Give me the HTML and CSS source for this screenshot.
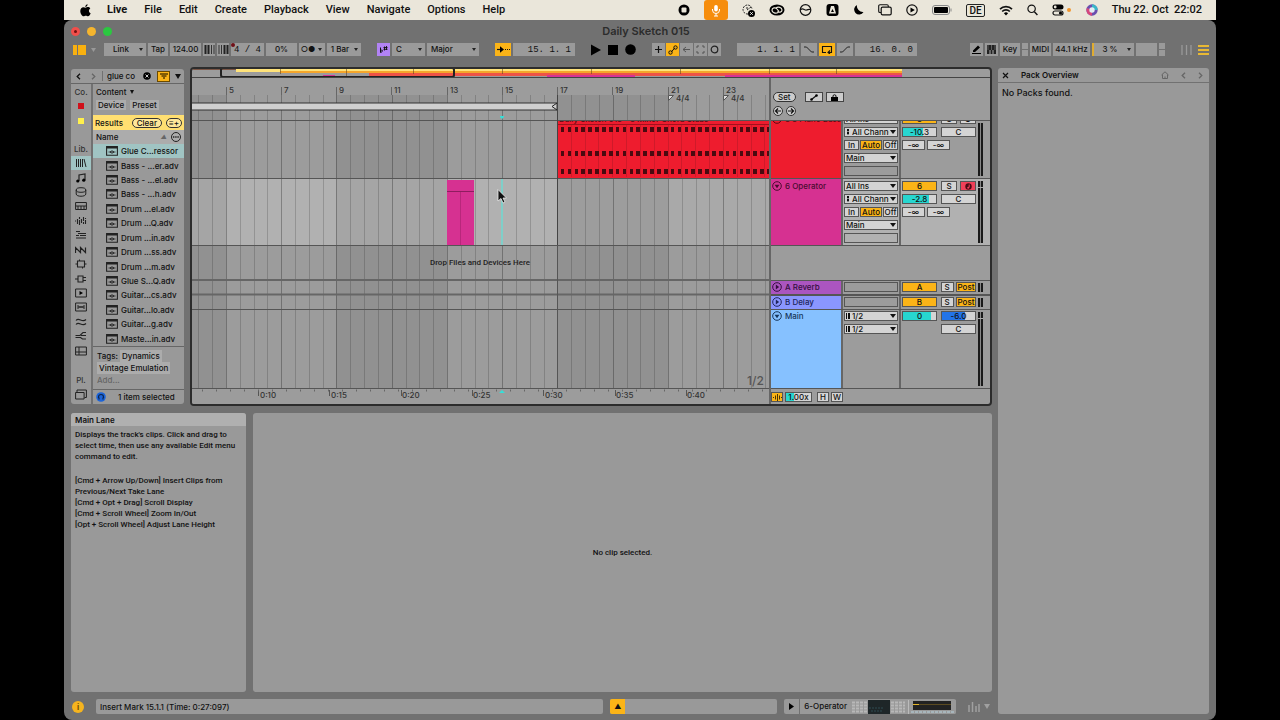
FILE: index.html
```html
<!DOCTYPE html>
<html lang="en">
<head>
    <meta charset="UTF-8">
    <meta name="viewport" content="width=device-width, initial-scale=1.0">
    <title>Daily Sketch 015</title>
    <link rel="stylesheet" href="styles.css">
</head>
<body>
    <!-- shared icons -->
    <svg class="defs" width="0" height="0">
        <symbol id="i-preset" viewBox="0 0 12 10"><path d="M.6.6h10.800v8.600H.6z" fill="none" stroke="#222" stroke-width="1.100"/><path d="M.5 1h11v1.600H.5z" fill="#222"/><path d="M2.500 6h7M4.500 5v2M6 4v4M7.500 5v2" stroke="#222" stroke-width=".8"/></symbol>
        <symbol id="i-fold" viewBox="0 0 10 10"><circle cx="5" cy="5" r="4.300" fill="none" stroke="currentColor"/><path d="M2.600 3.800h4.800L5 7.200z" fill="currentColor"/></symbol>
        <symbol id="i-unfold" viewBox="0 0 10 10"><circle cx="5" cy="5" r="4.300" fill="none" stroke="currentColor"/><path d="M3.800 2.600v4.800L7.200 5z" fill="currentColor"/></symbol>
        <symbol id="i-prev" viewBox="0 0 5 7"><path d="M4 .8L1.200 3.500 4 6.200" fill="none" stroke="currentColor" stroke-width="1.300"/></symbol>
        <symbol id="i-next" viewBox="0 0 5 7"><path d="M1 .8l2.800 2.700L1 6.200" fill="none" stroke="currentColor" stroke-width="1.300"/></symbol>
    </svg>

    <header class="menubar">
        <svg class="apple" width="11" height="13" viewBox="0 0 11 13"><path d="M7.600.2c.1 1.400-1 2.700-2.300 2.700C5.200 1.600 6.300.4 7.600.2zM5.600 3.700c.6 0 1.300-.6 2.300-.6.9 0 1.900.5 2.400 1.300-2 1.200-1.700 3.900.4 4.800-.5 1.300-1.500 3-2.700 3-.8 0-1.200-.5-2.200-.5s-1.400.5-2.200.5C2 12.200.2 9.300.3 6.900c0-2.300 1.500-3.700 3.100-3.700.9 0 1.600.5 2.200.5z"/></svg>
        <nav class="menus">
            <a class="app-name" href="#">Live</a>
            <a href="#">File</a>
            <a href="#">Edit</a>
            <a href="#">Create</a>
            <a href="#">Playback</a>
            <a href="#">View</a>
            <a href="#">Navigate</a>
            <a href="#">Options</a>
            <a href="#">Help</a>
        </nav>
        <div class="menu-extras">
            <svg width="12" height="12" viewBox="0 0 12 12"><circle cx="6" cy="6" r="5.500"/><rect x="3.500" y="3.500" width="5" height="5" rx="1" fill="#eae6da"/></svg>
            <span class="mic"><svg width="10" height="13" viewBox="0 0 10 13"><rect x="3.200" y="1" width="3.600" height="6.500" rx="1.800" fill="#fff"/><path d="M1.500 5v1a3.500 3.500 0 0 0 7 0V5M5 9.500v2.500M3 12h4" fill="none" stroke="#fff"/></svg></span>
            <svg width="13" height="13" viewBox="0 0 13 13"><path d="M6 10a4.500 4.500 0 1 1 4-5M5 3v3l4-3" fill="none" stroke="#222" stroke-dasharray="2 1"/><circle cx="9.500" cy="9.500" r="3.500"/><path d="M8.200 8.200l2.600 2.600M10.800 8.200l-2.600 2.600" stroke="#fff" stroke-width=".9"/></svg>
            <svg width="16" height="12" viewBox="0 0 16 12"><ellipse cx="8" cy="6" rx="7.500" ry="5.500"/><path d="M9 8.500c-2 1.300-6 .5-6-2.300 0-2.500 3.500-3.300 5-1.200l2 2.500M7 4c2-1.700 6-.8 6 2 0 2.300-3 3-4.500 1.300" fill="none" stroke="#eae6da" stroke-width="1.200"/></svg>
            <svg width="13" height="12" viewBox="0 0 13 12"><circle cx="6.500" cy="6" r="5.300" fill="none" stroke="#111" stroke-width="1.200"/><path d="M1.500 6c2-3 4 .5 6 0s2-1 4-.5" fill="none" stroke="#111" stroke-width="1.200"/></svg>
            <svg width="13" height="12" viewBox="0 0 13 12"><rect x=".5" width="12" height="12" rx="3"/><path d="M5 2h3l2 7.500H3z" fill="#eae6da"/><path d="M6.500 5L5 8h3z"/></svg>
            <svg width="11" height="12" viewBox="0 0 11 12"><path d="M4 1a5 5 0 1 0 6.500 7A6 6 0 0 1 4 1z"/></svg>
            <svg width="14" height="12" viewBox="0 0 14 12"><path d="M3 8.500H2A1.300 1.300 0 0 1 .7 7.200V2A1.300 1.300 0 0 1 2 .7h7A1.300 1.300 0 0 1 10.300 2v1" fill="none" stroke="#111" stroke-width="1.100"/><rect x="3.200" y="3.200" width="10" height="7.600" rx="1.400" fill="none" stroke="#111" stroke-width="1.200"/></svg>
            <svg width="12" height="12" viewBox="0 0 12 12"><circle cx="6" cy="6" r="5.200" fill="none" stroke="#111" stroke-width="1.200"/><path d="M4.500 3.400v5.200L8.800 6z"/></svg>
            <svg width="20" height="10" viewBox="0 0 20 10"><rect x=".5" y=".5" width="17" height="9" rx="2.500" fill="none" stroke="#888"/><rect x="2" y="2" width="14" height="6" rx="1"/><path d="M19 3.500v3" stroke="#888"/></svg>
            <span class="keyboard">DE</span>
            <svg width="14" height="11" viewBox="0 0 14 11"><path d="M1 4.200a8.500 8.500 0 0 1 12 0M3.200 6.500a5.300 5.300 0 0 1 7.600 0" fill="none" stroke="#111" stroke-width="1.700"/><path d="M4.900 8.300a3 3 0 0 1 4.200 0L7 10.500z"/></svg>
            <svg width="11" height="12" viewBox="0 0 11 12"><circle cx="4.600" cy="4.800" r="3.700" fill="none" stroke="#111" stroke-width="1.200"/><path d="M7.400 7.800l3 3.200" stroke="#111" stroke-width="1.400"/></svg>
            <svg width="20" height="12" viewBox="0 0 20 12"><rect x=".5" y=".5" width="11" height="5" rx="2.500"/><circle cx="3.200" cy="3" r="1.400" fill="#eae6da"/><rect x="1" y="7" width="10" height="4" rx="2" fill="none" stroke="#111" stroke-width="1.200"/><circle cx="8.500" cy="9" r="1.600"/><circle cx="17" cy="6" r="2" fill="#f2962c"/></svg>
            <svg width="12" height="12" viewBox="0 0 12 12"><circle cx="6" cy="6" r="5.700" fill="#6a4fae"/><path d="M6 .3A5.700 5.700 0 0 1 11.700 6L6 6z" fill="#38b6c8"/><path d="M6 11.700A5.700 5.700 0 0 1 .8 4L6 6z" fill="#d7477c"/><circle cx="6" cy="6" r="2.700" fill="#e3eef4"/></svg>
            <span class="clock">Thu 22. Oct&nbsp; 22:02</span>
        </div>
    </header>

    <main class="live">
        <div class="titlebar">
            <div class="lights"><i class="close"></i><i class="minimise"></i><i class="maximise"></i></div>
            <h1>Daily Sketch 015</h1>
        </div>

        <div class="transport">
            <div class="group">
                <button class="bare" aria-label="Browser"><svg width="23" height="12" viewBox="0 0 23 12"><path d="M0 1h4v10H0zM5 1h8v10H5z" fill="#f9b110"/><path d="M18 4h5l-2.500 4z" fill="#999"/></svg></button>
                <span class="spacer"></span>
                <span class="drop w42"><select aria-label="Link"><option>Link</option></select></span>
                <button class="cell w20">Tap</button>
                <input class="cell w31" aria-label="Tempo" value="124.00">
                <button class="cell w12" aria-label="Nudge down"><svg width="11" height="9" viewBox="0 0 11 9"><path d="M1.500 0v9M4.500 0v9" stroke="#222" stroke-width="2"/><path d="M7.500 0v9M10 0v9" stroke="#333"/></svg></button>
                <button class="cell w12" aria-label="Nudge up"><svg width="11" height="9" viewBox="0 0 11 9"><path d="M1 0v9M3.500 0v9" stroke="#333"/><path d="M6.500 0v9M9.500 0v9" stroke="#222" stroke-width="2"/></svg></button>
                <span class="signature"><input class="cell mono w33" aria-label="Time signature" value="4 / 4"></span>
                <input class="cell w31" aria-label="Groove" value="0%">
                <span class="drop w26"><select aria-label="Metronome"><option>○●</option></select></span>
                <span class="drop w34"><select aria-label="Quantization"><option>1 Bar</option></select></span>
            </div>
            <div class="group">
                <button class="cell w13 purple" aria-label="Scale"><svg width="9" height="9" viewBox="0 0 9 9"><path d="M1.500 2.500v5c1.200-.3 2-1 2-1.800S2.500 5 1.500 5.800" fill="none" stroke="#111"/><path d="M5.500 1.500v4M7.500 1v4M4.500 2.500h4M4.500 4.300h4" stroke="#111" stroke-width=".9"/></svg></button>
                <span class="drop left w33"><select aria-label="Root note"><option>C</option></select></span>
                <span class="drop left w52"><select aria-label="Scale name"><option>Major</option></select></span>
            </div>
            <div class="group">
                <button class="cell w16 on" aria-label="Follow"><svg width="14" height="9" viewBox="0 0 14 9"><path d="M1 4.500h4" stroke="#111" stroke-width="1.200"/><path d="M4 1.200l4 3.300-4 3.300z"/><path d="M9 4.500h5" stroke="#111" stroke-dasharray="1 1"/></svg></button>
                <input class="cell mono right w62" aria-label="Position" value="15. 1. 1">
            </div>
            <div class="group play">
                <button class="bare" aria-label="Play"><svg width="10" height="12" viewBox="0 0 10 12"><path d="M0 .5v11L10 6z"/></svg></button>
                <button class="bare" aria-label="Stop"><svg width="10" height="10" viewBox="0 0 10 10"><path d="M0 0h10v10H0z"/></svg></button>
                <button class="bare" aria-label="Record"><svg width="11" height="11" viewBox="0 0 11 11"><circle cx="5.500" cy="5.500" r="5.300"/></svg></button>
            </div>
            <div class="group tight">
                <button class="cell w13" aria-label="Overdub"><svg width="9" height="9" viewBox="0 0 9 9"><path d="M4.500 1v7M1 4.500h7" stroke="#111" stroke-width="1.200"/></svg></button>
                <button class="cell w13 on" aria-label="Automation arm"><svg width="10" height="10" viewBox="0 0 10 10"><path d="M3.200 7.200l3.600-4.400" stroke="#111"/><circle cx="2.500" cy="7.500" r="1.700" fill="none" stroke="#111"/><circle cx="7.500" cy="2.500" r="1.700" fill="none" stroke="#111"/></svg></button>
                <button class="cell w13" aria-label="Re-enable automation"><svg width="9" height="9" viewBox="0 0 9 9"><path d="M1 4.500h7M4 2L1 4.500 4 7" fill="none" stroke="#555"/></svg></button>
                <button class="cell w13" aria-label="Capture MIDI"><svg width="9" height="9" viewBox="0 0 9 9"><path d="M1 3V1h2M6 1h2v2M8 6v2H6M3 8H1V6" fill="none" stroke="#555"/></svg></button>
                <button class="cell w13" aria-label="Session record"><svg width="9" height="9" viewBox="0 0 9 9"><circle cx="4.500" cy="4.500" r="3.300" fill="none" stroke="#222" stroke-width="1.200"/></svg></button>
            </div>
            <div class="group">
                <input class="cell mono right w62" aria-label="Loop start" value="1. 1. 1">
                <button class="cell w16" aria-label="Punch in"><svg width="12" height="9" viewBox="0 0 12 9"><path d="M1 2h2.500l5 5H11" fill="none" stroke="#222"/></svg></button>
                <button class="cell w16 on" aria-label="Loop"><svg width="12" height="9" viewBox="0 0 12 9"><path d="M5 7.500H1.500v-6h9v6H8M9 5.500L7 7.500 9 9" fill="none" stroke="#111" stroke-width="1.100"/></svg></button>
                <button class="cell w16" aria-label="Punch out"><svg width="12" height="9" viewBox="0 0 12 9"><path d="M1 7h2.500l5-5H11" fill="none" stroke="#222"/></svg></button>
                <input class="cell mono right w62" aria-label="Loop length" value="16. 0. 0">
            </div>
            <div class="group push">
                <button class="cell w13" aria-label="Draw"><svg width="9" height="9" viewBox="0 0 9 9"><path d="M1 5.500L6 .5l2 2L3 7H1zM0 8h9v1H0z"/></svg></button>
                <button class="cell w13" aria-label="Computer keyboard"><svg width="9" height="9" viewBox="0 0 9 9"><path d="M0 0h9v9H0z" fill="#222"/><path d="M3 5v4M6 5v4" stroke="#aaa"/><path d="M1 0v5M4.500 0v5M8 0v5" stroke="#888" stroke-width=".6"/></svg></button>
                <button class="cell w20">Key</button>
                <i class="cell led"></i>
                <button class="cell w21">MIDI</button>
                <span class="cell w37">44.1 kHz</span>
                <span class="drop cpu w42"><select aria-label="CPU load"><option>3 %</option></select></span>
                <i class="cell w21"></i>
                <i class="cell led"></i>
            </div>
            <div class="group views">
                <button class="bare" aria-label="Session view"><svg width="11" height="12" viewBox="0 0 11 12"><path d="M1 1v10M5.500 1v10M10 1v10" stroke="#999" stroke-width="1.300"/></svg></button>
                <button class="bare" aria-label="Arrangement view"><svg width="11" height="12" viewBox="0 0 11 12"><path d="M0 2h11M0 6h11M0 10h11" stroke="#e9b934" stroke-width="1.800"/></svg></button>
            </div>
        </div>

        <div class="workspace">
            <div class="center">
                <div class="upper">
                    <aside class="browser">
                        <div class="search">
                            <button class="bare" aria-label="Back"><svg width="5" height="7"><use href="#i-prev"/></svg></button>
                            <button class="bare dim" aria-label="Forward"><svg width="5" height="7"><use href="#i-next"/></svg></button>
                            <input aria-label="Search" value="glue co">
                            <svg width="8" height="8" viewBox="0 0 8 8"><circle cx="4" cy="4" r="3.800"/><path d="M2.500 2.500l3 3M5.500 2.500l-3 3" stroke="#ccc"/></svg>
                            <button class="filter" aria-label="Filter"><svg width="8" height="7" viewBox="0 0 8 7"><path d="M0 1h8M1.500 3h5M3 5h2" stroke="#5b3f00" stroke-width="1.300"/></svg></button>
                            <i class="tri"></i>
                        </div>
                        <div class="browser-body">
                            <div class="labels">
                                <div class="collections">
                                    <span>Co.</span>
                                    <i class="red"></i>
                                    <i class="yellow"></i>
                                </div>
                                <span class="lib">Lib.</span>
                                <div class="icons">
                                    <span class="selected"><svg viewBox="0 0 12 10"><path d="M1.500 1v8M3.500 1v8M5.500 1v8M7.500 1v8M9 1l2 8" stroke="#222"/></svg></span>
                                    <span><svg viewBox="0 0 12 10"><path d="M4 8V2l6-1v6" fill="none" stroke="#222" stroke-width="1.200"/><circle cx="2.800" cy="8" r="1.600"/><circle cx="8.800" cy="7.200" r="1.600"/></svg></span>
                                    <span><svg viewBox="0 0 12 10"><ellipse cx="6" cy="3" rx="4.800" ry="2.300" fill="none" stroke="#222"/><path d="M1.200 3v4c0 3 9.600 3 9.600 0V3" fill="none" stroke="#222"/></svg></span>
                                    <span><svg viewBox="0 0 12 10"><path d="M.6 1.500h10.800v7H.6zM.6 5h10.800M3 5v3M6 5v3M9 5v3" fill="none" stroke="#222"/></svg></span>
                                    <span><svg viewBox="0 0 12 10"><path d="M.5 4.500v1M2.500 3v5M4.500 1v2M4.500 4v5M6.500 3v4M8.500 1v4M8.500 6v2M10.500 2v1M10.500 4v4" stroke="#222" stroke-width="1.100"/></svg></span>
                                    <span><svg viewBox="0 0 12 10"><path d="M1 1.500h4M3 3.500h8M5 5.500h6M1 5.500h3M1 8h10" stroke="#222"/></svg></span>
                                    <span><svg viewBox="0 0 12 10"><path d="M.5 8V2.500l5 5v-5l5 5V2.500" fill="none" stroke="#222" stroke-width="1.200"/></svg></span>
                                    <span><svg viewBox="0 0 12 10"><path d="M2.500 2h7v6h-7zM.5 5h2M9.500 5h2M4.500 .5V2M7.500 8v1.500" fill="none" stroke="#222" stroke-width="1.100"/></svg></span>
                                    <span><svg viewBox="0 0 12 10"><path d="M3 2h5v6H3zM0 5h3M8 3.500h3M8 6.500h3" fill="none" stroke="#222" stroke-width="1.100"/></svg></span>
                                    <span><svg viewBox="0 0 12 10"><path d="M.6 1h10.800v8H.6z" fill="none" stroke="#222"/><path d="M4.500 3v4L8 5z"/></svg></span>
                                    <span><svg viewBox="0 0 12 10"><path d="M.6 1h10.800v8H.6zM3 3v4M5 4v2M7 4v2M9 3v4M3 5h6" fill="none" stroke="#222"/></svg></span>
                                    <span><svg viewBox="0 0 12 10"><path d="M1 3.500c3-4 6 3 10-1M1 7.500c3-4 6 3 10-1" fill="none" stroke="#222" stroke-width="1.100"/></svg></span>
                                    <span><svg viewBox="0 0 12 10"><path d="M11 1.500H8L5 4.500H.5M11 4.500H6M11 8H7.500L5.500 6.500H.5" fill="none" stroke="#222" stroke-width="1.100"/></svg></span>
                                    <span><svg viewBox="0 0 12 10"><path d="M.6 1h10.800v8H.6zM.6 6h10.800M4 1v8" fill="none" stroke="#222"/></svg></span>
                                </div>
                                <span class="places">Pl.</span>
                                <svg class="packs-icon" width="12" height="11" viewBox="0 0 12 11"><path d="M.6 3.500h8.500v6.500H.6zM2 3V1h9.400v7.500H9.500" fill="none" stroke="#222"/></svg>
                            </div>
                            <div class="content">
                                <div class="content-head">Content <i class="tri small-tri"></i></div>
                                <div class="chips"><button>Device</button><button>Preset</button></div>
                                <div class="results">Results <button>Clear</button><button>≡+</button></div>
                                <div class="name-head">Name <i class="up">▲</i><button aria-label="Columns"><svg width="8" height="8" viewBox="0 0 8 8"><path d="M1 4h6" stroke="#222" stroke-width="1.400" stroke-dasharray="1.400 .8"/></svg></button></div>
                                <ul class="list">
                                    <li class="selected"><svg><use href="#i-preset"/></svg>Glue C...ressor</li>
                                    <li><svg><use href="#i-preset"/></svg>Bass - ...er.adv</li>
                                    <li><svg><use href="#i-preset"/></svg>Bass - ...el.adv</li>
                                    <li><svg><use href="#i-preset"/></svg>Bass - ...h.adv</li>
                                    <li><svg><use href="#i-preset"/></svg>Drum ...el.adv</li>
                                    <li><svg><use href="#i-preset"/></svg>Drum ...Q.adv</li>
                                    <li><svg><use href="#i-preset"/></svg>Drum ...in.adv</li>
                                    <li><svg><use href="#i-preset"/></svg>Drum ...ss.adv</li>
                                    <li><svg><use href="#i-preset"/></svg>Drum ...m.adv</li>
                                    <li><svg><use href="#i-preset"/></svg>Glue S...Q.adv</li>
                                    <li><svg><use href="#i-preset"/></svg>Guitar...cs.adv</li>
                                    <li><svg><use href="#i-preset"/></svg>Guitar...lo.adv</li>
                                    <li><svg><use href="#i-preset"/></svg>Guitar...g.adv</li>
                                    <li><svg><use href="#i-preset"/></svg>Maste...in.adv</li>
                                </ul>
                                <div class="tags">Tags: <span>Dynamics</span><br><span>Vintage Emulation</span><br><em>Add...</em></div>
                                <div class="selection"><svg width="10" height="10" viewBox="0 0 10 10"><circle cx="5" cy="5" r="4.800" fill="#1c64d8"/><path d="M2.500 6V5a2.500 2.500 0 0 1 5 0v1M3 5.500v2M7 5.500v2" fill="none" stroke="#0b2550" stroke-width="1.200"/></svg><span>1 item selected</span></div>
                            </div>
                        </div>
                    </aside>

                    <section class="arrangement">
                        <svg class="overview" height="9">
                            <rect x="0" y="0" width="44" height="1" fill="#7a5545"/>
                            <rect x="44" y="0" width="666" height="3" fill="#ffe37a"/>
                            <rect x="88" y="2" width="622" height="2" fill="#f5a62b"/>
                            <rect x="177" y="4" width="533" height="3" fill="#ee5346"/>
                            <rect x="131" y="6" width="12" height="2" fill="#d53394"/>
                            <rect x="355" y="6" width="88" height="2" fill="#d53394"/>
                            <rect x="533" y="6" width="177" height="2" fill="#d53394"/>
                            <path d="M88.500 0v5M154.500 0v8M221.500 0v5M310.500 0v5M399.500 0v5M488.500 0v5M577.500 0v5M644.500 0v5" stroke="#6b4a20" stroke-opacity=".6"/>
                            <rect x="29" y="-1" width="233" height="9" rx="2" fill="none" stroke="#222" stroke-width="2"/>
                        </svg>
                        <div class="arrangement-body">
                            <svg class="timeline" height="326">
                                <defs>
                                    <!-- one tile is eight bars: four light, four dark, a line each half bar -->
                                    <pattern id="bars" x="34" y="0" width="221" height="327" patternUnits="userSpaceOnUse">
                                        <rect x="110" width="111" height="327" fill="#000" fill-opacity=".07"/>
                                        <path d="M14.500 0v327M28.500 0v327M41.500 0v327M69.500 0v327M83.500 0v327M97.500 0v327M124.500 0v327M138.500 0v327M152.500 0v327M180.500 0v327M193.500 0v327M207.500 0v327" stroke="#000" stroke-opacity=".17"/>
                                        <path d="M.5 0v327M55.500 0v327M110.500 0v327M166.500 0v327" stroke="#000" stroke-opacity=".27"/>
                                    </pattern>
                                    <pattern id="notes" x="369" y="43" width="55" height="60" patternUnits="userSpaceOnUse">
                                        <path d="M0 6h3v5H0zM7 6h3v5H7zM14 6h3v5h-3zM20 6h4v5h-4zM27 6h4v5h-4zM34 6h4v5h-4zM41 6h4v5h-4zM48 6h4v5h-4zM0 30h3v5H0zM7 30h3v5H7zM14 30h3v5h-3zM20 30h4v5h-4zM27 30h4v5h-4zM34 30h4v5h-4zM41 30h4v5h-4zM48 30h4v5h-4zM0 48h3v5H0zM7 48h3v5H7zM14 48h3v5h-3zM20 48h4v5h-4zM27 48h4v5h-4zM34 48h4v5h-4zM41 48h4v5h-4zM48 48h4v5h-4z" fill="#4a0a10"/>
                                    </pattern>
                                    <clipPath id="track5"><rect y="43" width="100%" height="57"/></clipPath>
                                </defs>
                                <rect width="100%" height="327" fill="#9c9c9c"/>
                                <rect y="101" width="100%" height="66" fill="#b1b1b1"/>
                                <rect x="365" y="101" width="100%" height="66" fill="#a9a9a9"/>
                                <rect y="17" width="100%" height="294" fill="url(#bars)"/>

                                <!-- bar ruler -->
                                <path d="M34.500 9v8M89.500 9v8M144.500 9v8M199.500 9v8M255.500 9v8M310.500 9v8M365.500 9v8M420.500 9v8M476.500 9v8M531.500 9v8" stroke="#666"/>
                                <g class="ruler-text">
                                    <text x="37" y="15">5</text>
                                    <text x="92" y="15">7</text>
                                    <text x="147" y="15">9</text>
                                    <text x="202" y="15">11</text>
                                    <text x="258" y="15">13</text>
                                    <text x="313" y="15">15</text>
                                    <text x="368" y="15">17</text>
                                    <text x="423" y="15">19</text>
                                    <text x="479" y="15">21</text>
                                    <text x="534" y="15">23</text>
                                    <text x="484" y="23">4/4</text>
                                    <text x="539" y="23">4/4</text>
                                </g>
                                <path d="M476.500 17.500h5l-5 5zM531.500 17.500h5l-5 5z" fill="#ddd" stroke="#555"/>
                                <rect x="-1" y="25" width="366" height="7" fill="#cfcfcf" stroke="#333"/>
                                <path d="M365 25l-5 3.500 5 3.500" fill="none" stroke="#222"/>
                                <path d="M308 38h4v1l-2 2-2-2z" fill="#35dfd8"/>

                                <!-- clips -->
                                <g clip-path="url(#track5)">
                                    <rect x="365" y="43" width="100%" height="57" fill="#ee1c2e"/>
                                    <text class="clip-name" x="367" y="44">Daily Sketch 015 - 5 Minor Chord Stabs</text>
                                    <path d="M365 46.500h220" stroke="#a3101d"/>
                                    <path d="M379.500 47v52M393.500 47v52M406.500 47v52M420.500 47v52M434.500 47v52M448.500 47v52M462.500 47v52M476.500 47v52M489.500 47v52M503.500 47v52M517.500 47v52M531.500 47v52M545.500 47v52M559.500 47v52M572.500 47v52" stroke="#cf1a2a"/>
                                    <rect x="366" y="43" width="100%" height="57" fill="url(#notes)"/>
                                </g>
                                <rect x="255" y="102" width="27" height="65" fill="#d63191"/>
                                <path d="M255 113.500h27" stroke="#8e1d5f"/>
                                <path d="M268.500 114v53" stroke="#b8277b"/>
                                <rect x="309" y="101" width="2" height="66" fill="#7fcfc9"/>

                                <!-- lane borders -->
                                <path d="M0 42.500h600M0 100.500h600M0 167.500h600M0 231.500h600M0 310.500h600" stroke="#555"/>
                                <path d="M0 202h600M0 216.500h600" stroke="#666" stroke-width="2"/>
                                <path d="M365.500 17v150" stroke="#444"/>
                                <path d="M365.500 167v144" stroke="#555"/>

                                <text class="drop-text" x="288" y="187">Drop Files and Devices Here</text>
                                <text class="grid-text" x="555" y="307">1/2</text>

                                <!-- time ruler -->
                                <path d="M66.500 312v6M137.500 312v6M209.500 312v6M280.500 312v6M351.500 312v6M423.500 312v6M494.500 312v6" stroke="#555"/>
                                <path d="M10 312.500h570" stroke="#666" stroke-width="2" stroke-dasharray="1 13"/>
                                <g class="ruler-text">
                                    <text x="68" y="320">0:10</text>
                                    <text x="139" y="320">0:15</text>
                                    <text x="210" y="320">0:20</text>
                                    <text x="281" y="320">0:25</text>
                                    <text x="353" y="320">0:30</text>
                                    <text x="424" y="320">0:35</text>
                                    <text x="495" y="320">0:40</text>
                                </g>
                                <path d="M307 315l3-3 3 3z" fill="#35dfd8"/>

                                <!-- pointer -->
                                <path d="M306 111.500v11.500l3-2.500 2 4.500 2-1-2-4h3.500z" fill="#111" stroke="#eee" stroke-width=".8"/>
                            </svg>

                            <div class="tracks">
                                <div class="locators">
                                    <div><button class="pill">Set</button><button class="square" aria-label="Automation"><svg width="8" height="7" viewBox="0 0 8 7"><path d="M1.500 5.500l5-4" stroke="#111" stroke-width="1.200"/><circle cx="1.500" cy="5.500" r="1.300"/><circle cx="6.500" cy="1.500" r="1.300"/></svg></button><button class="square" aria-label="Lock"><svg width="7" height="7" viewBox="0 0 7 7"><path d="M0 3h7v4H0z"/><path d="M2 3V1.500Q3.500 0 5 1.500V3" fill="none" stroke="#111"/></svg></button></div>
                                    <div><button class="round" aria-label="Previous locator"><svg width="8" height="8" viewBox="0 0 8 8"><path d="M1.500 4H7M4 1.500L1.500 4 4 6.500" fill="none" stroke="#111" stroke-width="1.200"/></svg></button><button class="round" aria-label="Next locator"><svg width="8" height="8" viewBox="0 0 8 8"><path d="M1 4h5.500M4 1.500L6.500 4 4 6.500" fill="none" stroke="#111" stroke-width="1.200"/></svg></button></div>
                                </div>
                                <div class="track scrolled">
                                    <div class="track-name red"><svg><use href="#i-fold"/></svg>5 5 Piano Bass</div>
                                    <div class="io">
                                        <span class="pick"><select aria-label="Input type"><option>All Ins</option></select></span>
                                        <span class="pick port"><select aria-label="Input channel"><option>All Channels</option></select></span>
                                        <div class="monitor"><button>In</button><button class="on">Auto</button><button>Off</button></div>
                                        <span class="pick"><select aria-label="Output type"><option>Main</option></select></span>
                                        <span class="blank"></span>
                                    </div>
                                    <div class="mixer">
                                        <div><button class="act on">5</button><button class="small">S</button><button class="small">●</button></div>
                                        <div><input class="vol v65" aria-label="Volume" value="-10.3"><input class="pan" aria-label="Pan" value="C"></div>
                                        <div><input class="send" aria-label="Send A" value="-∞"><input class="send" aria-label="Send B" value="-∞"></div>
                                    </div>
                                    <i class="meter"></i>
                                </div>
                                <div class="track active">
                                    <div class="track-name pink"><svg><use href="#i-fold"/></svg>6 Operator</div>
                                    <div class="io">
                                        <span class="pick"><select aria-label="Input type"><option>All Ins</option></select></span>
                                        <span class="pick port"><select aria-label="Input channel"><option>All Channels</option></select></span>
                                        <div class="monitor"><button>In</button><button class="on">Auto</button><button>Off</button></div>
                                        <span class="pick"><select aria-label="Output type"><option>Main</option></select></span>
                                        <span class="blank"></span>
                                    </div>
                                    <div class="mixer">
                                        <div><button class="act on">6</button><button class="small">S</button><button class="small arm" aria-label="Arm"><svg width="7" height="7" viewBox="0 0 7 7"><circle cx="3.500" cy="3.500" r="3.200" fill="#4a0a14"/><path d="M4.200 1.500v3" stroke="#f04058"/><circle cx="3.200" cy="4.700" r="1" fill="#f04058"/></svg></button></div>
                                        <div><input class="vol v78" aria-label="Volume" value="-2.8"><input class="pan" aria-label="Pan" value="C"></div>
                                        <div><input class="send" aria-label="Send A" value="-∞"><input class="send" aria-label="Send B" value="-∞"></div>
                                    </div>
                                    <i class="meter peak"></i>
                                </div>
                                <div class="drop-zone"></div>
                                <div class="track return">
                                    <div class="track-name violet"><svg><use href="#i-unfold"/></svg>A Reverb</div>
                                    <div class="io"><span class="blank"></span></div>
                                    <div class="mixer"><div><button class="act on">A</button><button class="solo">S</button><button class="post on">Post</button></div></div>
                                    <i class="meter"></i>
                                </div>
                                <div class="track return last">
                                    <div class="track-name blue"><svg><use href="#i-unfold"/></svg>B Delay</div>
                                    <div class="io"><span class="blank"></span></div>
                                    <div class="mixer"><div><button class="act on">B</button><button class="solo">S</button><button class="post on">Post</button></div></div>
                                    <i class="meter"></i>
                                </div>
                                <div class="track main">
                                    <div class="track-name sky"><svg><use href="#i-fold"/></svg>Main</div>
                                    <div class="io">
                                        <span class="pick stereo"><select aria-label="Cue out"><option>1/2</option></select></span>
                                        <span class="pick stereo"><select aria-label="Main out"><option>1/2</option></select></span>
                                    </div>
                                    <div class="mixer">
                                        <div><input class="vol v85" aria-label="Main volume" value="0"><input class="pan cue" aria-label="Cue volume" value="-6.0"></div>
                                        <div class="end"><input class="pan" aria-label="Pan" value="C"></div>
                                    </div>
                                    <i class="meter peak"></i>
                                </div>
                                <div class="zoom-bar">
                                    <button class="wave on" aria-label="Waveform"><svg width="9" height="7" viewBox="0 0 9 7"><path d="M.5 3v1M2.500 1.500v4M4.500 0v7M6.500 1.500v4M8.500 3v1" stroke="#4a3200"/></svg></button>
                                    <input class="rate" aria-label="Waveform zoom" value="1.00x">
                                    <button>H</button><button>W</button>
                                </div>
                            </div>
                        </div>
                    </section>
                </div>

                <div class="lower">
                    <aside class="info">
                        <h2>Main Lane</h2>
                        <p>Displays the track's clips. Click and drag to select time, then use any available Edit menu command to edit.</p>
                        <p>[Cmd + Arrow Up/Down] Insert Clips from Previous/Next Take Lane<br>[Cmd + Opt + Drag] Scroll Display<br>[Cmd + Scroll Wheel] Zoom In/Out<br>[Opt + Scroll Wheel] Adjust Lane Height</p>
                    </aside>
                    <section class="clip-view">No clip selected.</section>
                </div>

                <footer class="status">
                    <button class="info-toggle">i</button>
                    <div class="message">Insert Mark 15.1.1 (Time: 0:27:097)</div>
                    <div class="clip-slot"><button class="on" aria-label="Warning">▲</button></div>
                    <div class="device">
                        <button class="bare" aria-label="Show device"><svg width="6" height="7" viewBox="0 0 6 7"><path d="M0 0v7l5-3.500z"/></svg></button>
                        <span>6-Operator</span>
                        <svg width="105" height="14" viewBox="0 0 105 14"><path d="M1 2.500h16M1 5.500h16M1 8.500h16M1 11.500h16M40 2.500h14M40 5.500h14M40 8.500h14M40 11.500h14" stroke="#b8b8b8" stroke-width="2" stroke-dasharray="3 1"/><rect x="17" width="22" height="14" fill="#1e2628"/><path d="M18 8h15M20 11h12" stroke="#2f4a50" stroke-dasharray="2 1"/><path d="M57.500 0v14" stroke="#bbb"/><rect x="58" width="47" height="14" fill="#999"/><rect x="62" y="1" width="38" height="9" fill="#222"/><path d="M62 4.500h38" stroke="#5b4a20"/><path d="M62 4.500h6" stroke="#e5b72b"/><path d="M60 12h44" stroke="#a8b6bc" stroke-width="2" stroke-dasharray="3 1"/></svg>
                    </div>
                    <button class="bare" aria-label="Overview"><svg width="22" height="11" viewBox="0 0 22 11"><path d="M1 4v7M4.500 1v10M8 5v6M11 3v8" stroke="#a0a0a0" stroke-width="1.500"/><path d="M16 3h6l-3 5z" fill="#a0a0a0"/></svg></button>
                </footer>
            </div>

            <aside class="packs">
                <div class="packs-head">
                    <button class="bare" aria-label="Close"><svg width="7" height="7" viewBox="0 0 7 7"><path d="M1 1l5 5M6 1L1 6" stroke="#111" stroke-width="1.200"/></svg></button>
                    <h2>Pack Overview</h2>
                    <button class="bare dim" aria-label="Home"><svg width="8" height="8" viewBox="0 0 8 8"><path d="M.5 4L4 .8 7.500 4M1.500 3.500v4h5v-4M4 7.500v-2" fill="none" stroke="#666"/></svg></button>
                    <button class="bare dim" aria-label="Back"><svg width="5" height="7"><use href="#i-prev"/></svg></button>
                    <button class="bare dim" aria-label="Forward"><svg width="5" height="7"><use href="#i-next"/></svg></button>
                </div>
                <p>No Packs found.</p>
            </aside>
        </div>
    </main>
</body>
</html>
```

FILE: styles.css
```css
* {
    box-sizing: border-box;
}
body {
    margin: 0;
    padding: 0 5%;
    min-height: 100vh;
    display: flex;
    flex-direction: column;
    background: #000;
    color: #111;
    font-family: Inter, "Liberation Sans", sans-serif;
    font-size: 8px;
    font-weight: 500;
    line-height: 10px;
}
h1, h2, p, ul {
    margin: 0;
    padding: 0;
}
button, input, select {
    margin: 0;
    padding: 0;
    border: 0;
    border-radius: 0;
    background: none;
    color: inherit;
    font: inherit;
    min-width: 0;
    text-align: center;
    appearance: none;
}
button {
    display: flex;
    align-items: center;
    justify-content: center;
}
svg {
    display: block;
    flex: none;
}
.defs {
    position: absolute;
}

/* system menu bar */
.menubar {
    display: flex;
    align-items: center;
    justify-content: space-between;
    height: 20px;
    padding: 0 14px 0 16px;
    background: #eae6da;
    font-family: Roboto, "Liberation Sans", sans-serif;
    font-size: 11px;
    line-height: 14px;
}
.menus {
    display: flex;
    gap: 17px;
    margin: 0 auto 0 16px;
}
.menus a {
    color: #111;
    text-decoration: none;
}
.menus .app-name {
    font-weight: 700;
}
.menu-extras {
    display: flex;
    align-items: center;
    gap: 14px;
}
.mic {
    display: flex;
    align-items: center;
    justify-content: center;
    width: 24px;
    height: 20px;
    border-radius: 3px;
    background: #f68d0c;
}
.keyboard {
    padding: 0 2px;
    border: 1px solid #222;
    border-radius: 2px;
    font-size: 10px;
    line-height: 11px;
}

/* window */
.live {
    flex: 1;
    display: flex;
    flex-direction: column;
    border-radius: 8px;
    background: #717171;
}
.titlebar {
    display: grid;
    grid-template-columns: 1fr auto 1fr;
    align-items: center;
    height: 22px;
    padding: 0 7px;
}
.titlebar h1 {
    margin-left: 12px;
    color: #2c2c2c;
    font-size: 11px;
    font-weight: 600;
    line-height: 14px;
}
.lights {
    display: flex;
    gap: 7px;
}
.lights i {
    width: 9px;
    height: 9px;
    border-radius: 50%;
}
.lights .close {
    border: 3px solid #f04e4a;
    background: #701010;
}
.lights .minimise {
    background: #f5b52e;
}
.lights .maximise {
    background: #2bc840;
}

/* transport */
.transport {
    display: flex;
    align-items: center;
    gap: 16px;
    height: 15px;
    padding: 0 7px 0 9px;
}
.group {
    display: flex;
    align-items: center;
    gap: 2px;
}
.group.play {
    gap: 7px;
}
.group.tight {
    gap: 1px;
}
.group.push {
    margin-left: auto;
}
.group.views {
    gap: 6px;
}
.spacer {
    width: 4px;
}
.cell, .drop select {
    display: flex;
    align-items: center;
    justify-content: center;
    height: 13px;
    background: #9a9a9a;
    line-height: 13px;
}
.mono {
    padding-top: 1px;
    font-family: "Liberation Mono", monospace;
    font-size: 9px;
}
.right {
    padding-right: 4px;
    text-align: right;
}
.signature {
    position: relative;
    display: flex;
}
.signature::before {
    content: "";
    position: absolute;
    top: 0;
    left: 0;
    width: 4px;
    height: 4px;
    border-radius: 50%;
    background: #701018;
}
.cell.on {
    background: #fbb417;
}
.cell.purple {
    background: #b283f5;
}
.cell.led {
    width: 6px;
    background: linear-gradient(#9a9a9a 6px, #717171 6px, #717171 7px, #9a9a9a 7px);
}
.drop {
    position: relative;
    display: flex;
}
.drop select {
    width: 100%;
    padding-right: 8px;
}
.drop.left select {
    padding-left: 4px;
    text-align: left;
}
.drop::after {
    content: "";
    position: absolute;
    top: 5px;
    right: 3px;
    border: 2px solid transparent;
    border-top: 3px solid #222;
    border-bottom: 0;
}
.drop.cpu {
    border-left: 2px solid #e0ac30;
}
.w12 { width: 12px; }
.w13 { width: 13px; }
.w16 { width: 16px; }
.w20 { width: 20px; }
.w21 { width: 21px; }
.w26 { width: 26px; }
.w31 { width: 31px; }
.w33 { width: 33px; }
.w34 { width: 34px; }
.w37 { width: 37px; }
.w42 { width: 42px; }
.w52 { width: 52px; }
.w62 { width: 62px; }

/* workspace */
.workspace {
    flex: 1;
    display: flex;
    gap: 6px;
    padding: 10px 7px 6px;
}
.center {
    flex: 1;
    min-width: 0;
    display: flex;
    flex-direction: column;
    gap: 7px;
}
.upper, .lower {
    display: flex;
    gap: 6px;
}
.tri {
    border: 3px solid transparent;
    border-top: 5px solid #111;
    border-bottom: 0;
}
.small-tri {
    border-width: 2px;
    border-top-width: 4px;
    border-bottom: 0;
}
.dim {
    color: #666;
}

/* browser */
.browser {
    display: flex;
    flex-direction: column;
    width: 113px;
    margin: 2px 0;
    overflow: hidden;
    border-radius: 3px;
    background: #999;
}
.search {
    display: flex;
    align-items: center;
    gap: 6px;
    height: 14px;
    padding: 0 3px 0 5px;
}
.search button + button {
    padding-left: 4px;
}
.search input {
    flex: 1;
    padding-left: 4px;
    border-left: 1px solid #717171;
    text-align: left;
}
.search .filter {
    width: 13px;
    height: 11px;
    padding: 0;
    border: 1px solid #6b4a00;
    background: #fbb417;
}
.search .tri {
    margin-left: -1px;
}
.browser-body {
    flex: 1;
    display: flex;
    border-top: 1px solid #666;
}
.labels {
    display: flex;
    flex-direction: column;
    align-items: center;
    width: 22px;
    border-right: 2px solid #717171;
    color: #333;
}
.collections {
    display: flex;
    flex-direction: column;
    align-items: center;
    gap: 9px;
    height: 60px;
    padding-top: 3px;
}
.collections span {
    margin-bottom: -3px;
}
.collections i {
    width: 6px;
    height: 6px;
}
.collections .red {
    background: #d0101a;
}
.collections .yellow {
    background: #fff04c;
}
.icons {
    display: grid;
    grid-template-rows: repeat(14, 1fr);
    width: 100%;
    height: 202px;
    margin-top: 2px;
}
.icons span {
    display: flex;
    align-items: center;
    justify-content: center;
}
.icons svg {
    width: 12px;
    height: 10px;
}
.icons .selected, .list .selected {
    background: #a0c4c3;
}
.places {
    margin: 17px 0 4px;
}
.content {
    flex: 1;
    display: flex;
    flex-direction: column;
}
.content-head, .chips, .results, .name-head {
    display: flex;
    align-items: center;
    gap: 4px;
    padding: 0 3px;
}
.content-head {
    height: 16px;
}
.chips {
    height: 14px;
    margin-bottom: 1px;
    align-items: flex-start;
}
.chips button {
    padding: 0 2px;
    background: #acacac;
}
.results {
    height: 15px;
    padding: 0 2px;
    background: #ffdf71;
}
.results button, .pill {
    height: 10px;
    padding: 0 4px;
    border: 1px solid #333;
    border-radius: 5px;
    background: #ccc;
}
.results button {
    background: #ffe79a;
}
.results button:first-of-type {
    margin-left: auto;
}
.results button + button {
    padding: 0 2px;
}
.name-head {
    height: 14px;
    background: #acacac;
}
.up {
    margin-left: auto;
    color: #666;
    font-size: 6px;
}
.name-head button {
    width: 10px;
    height: 10px;
    border: 1px solid #222;
    border-radius: 50%;
}
.list {
    display: grid;
    grid-template-rows: repeat(14, 1fr);
    height: 202px;
    list-style: none;
}
.list li {
    display: flex;
    align-items: center;
    gap: 3px;
    padding-left: 13px;
    white-space: nowrap;
}
.list svg {
    width: 12px;
    height: 10px;
}
.tags {
    height: 43px;
    padding: 3px 4px;
    border-top: 1px solid #666;
    line-height: 12px;
}
.tags span {
    padding: 1px 2px;
    background: #acacac;
}
.tags em {
    color: #666;
    font-style: normal;
}
.selection {
    flex: 1;
    display: flex;
    align-items: center;
    gap: 12px;
    padding-left: 3px;
    border-top: 1px solid #666;
}

/* arrangement */
.arrangement {
    flex: 1;
    min-width: 0;
    overflow: hidden;
    border: 2px solid #2c2c2c;
    border-radius: 4px;
    background: #9c9c9c;
}
.overview {
    width: 100%;
    border-bottom: 1px solid #444;
}
.arrangement-body {
    display: flex;
}
.timeline {
    flex: 1;
    min-width: 0;
}
.ruler-text {
    fill: #333;
    font-size: 8px;
}
.clip-name {
    fill: #5c0a12;
    font-size: 8px;
}
.drop-text {
    fill: #222;
    font-family: Roboto, "Liberation Sans", sans-serif;
    font-size: 8px;
    text-anchor: middle;
}
.grid-text {
    fill: #555;
    font-size: 12px;
}
.tracks {
    width: 221px;
    border-left: 2px solid #666;
}
.locators {
    display: flex;
    flex-direction: column;
    gap: 4px;
    height: 43px;
    padding: 14px 2px 0;
    border-bottom: 1px solid #555;
}
.locators div {
    display: flex;
    gap: 3px;
}
.square {
    width: 18px;
    height: 10px;
    margin-left: 6px;
    border: 1px solid #444;
    background: #ccc;
}
.square + .square {
    margin-left: 0;
}
.round {
    width: 10px;
    height: 10px;
    border: 1px solid #333;
    border-radius: 50%;
    background: #ccc;
}
.track {
    display: flex;
    height: 67px;
    overflow: hidden;
    border-bottom: 1px solid #555;
}
.track > * {
    flex: none;
    height: 66px;
}
.scrolled {
    align-items: flex-end;
    height: 58px;
}
.track.active {
    background: #b1b1b1;
}
.track-name {
    display: flex;
    align-items: flex-start;
    gap: 3px;
    width: 72px;
    padding: 2px 1px;
    border-right: 2px solid #666;
    white-space: nowrap;
    overflow: hidden;
}
.track-name svg {
    width: 10px;
    height: 10px;
}
.red { background: #ee1c2e; color: #5c0a12; }
.pink { background: #d63191; color: #4a0c30; }
.violet { background: #ab55c0; color: #35103f; }
.blue { background: #8a96ff; color: #20255c; }
.sky { background: #86c1ff; color: #17365a; }
.io {
    display: flex;
    flex-direction: column;
    gap: 3px;
    width: 58px;
    padding: 2px 1px;
    border-right: 2px solid #666;
}
.pick {
    position: relative;
    display: flex;
    height: 10px;
    border: 1px solid #555;
    background: #d4d4d4;
    overflow: hidden;
}
.pick select {
    width: 100%;
    padding: 0 8px 0 1px;
    line-height: 8px;
    text-align: left;
    text-overflow: clip;
}
.pick::after {
    content: "";
    position: absolute;
    top: 2px;
    right: 1px;
    border: 3px solid transparent;
    border-top: 4px solid #111;
    border-bottom: 0;
}
.pick.port::before, .pick.stereo::before {
    content: "";
    flex: none;
    width: 2px;
    margin: 1px 2px;
    background: repeating-linear-gradient(#111 0, #111 2px, #888 2px, #888 3px);
}
.pick.stereo::before {
    width: 4px;
    margin: 1px;
    background: linear-gradient(90deg, #111 1px, transparent 1px, transparent 2px, #111 2px);
}
.blank {
    height: 10px;
    border: 1px solid #555;
}
.monitor, .mixer div {
    display: flex;
    justify-content: space-between;
    height: 10px;
}
.monitor button, .mixer button, .mixer input, .zoom-bar button, .zoom-bar input {
    height: 10px;
    border: 1px solid #555;
    background: #d4d4d4;
    line-height: 8px;
}
.monitor button {
    width: 15px;
}
.monitor .on {
    width: 22px;
}
.monitor .on, .mixer .on, .zoom-bar .on {
    background: #fbb417;
}
.mixer {
    display: flex;
    flex-direction: column;
    gap: 3px;
    width: 76px;
    padding: 2px 1px;
}
.mixer div:nth-child(3) {
    justify-content: flex-start;
    gap: 2px;
}
.mixer .end {
    justify-content: flex-end;
}
.mixer .act, .mixer .vol, .mixer .pan {
    width: 35px;
}
.mixer .small {
    width: 16px;
}
.mixer .solo {
    width: 13px;
}
.mixer .post {
    width: 20px;
}
.mixer .act {
    margin-right: 1px;
}
.mixer .arm {
    background: #f04058;
}
.mixer .send {
    width: 23px;
}
.mixer .v65 { background: linear-gradient(90deg, #27d6d0 60%, #d4d4d4 60%); }
.mixer .v78 { background: linear-gradient(90deg, #27d6d0 78%, #d4d4d4 78%); }
.mixer .v85 { background: linear-gradient(90deg, #27d6d0 85%, #d4d4d4 85%); }
.mixer .cue { background: linear-gradient(90deg, #2374e8 70%, #d4d4d4 70%); }
.meter {
    width: 5px;
    margin: 2px 0 2px 1px;
    background: linear-gradient(90deg, #1a1a1a 2px, #888 2px, #888 3px, #1a1a1a 3px);
}
.track .meter {
    height: auto;
    align-self: stretch;
}
.meter.peak {
    background: linear-gradient(#aaa, #aaa) 0 6px / 5px 1px no-repeat, linear-gradient(90deg, #1a1a1a 2px, #888 2px, #888 3px, #1a1a1a 3px);
}
.drop-zone {
    height: 35px;
    border-bottom: 1px solid #555;
}
.return {
    height: 15px;
    border-bottom-width: 2px;
}
.return.last {
    height: 14px;
    border-bottom-width: 1px;
}
.return > * {
    height: 13px;
}
.return > div, .main > div {
    padding-top: 1px;
}
.main {
    height: 79px;
}
.main > * {
    height: 78px;
}
.zoom-bar {
    display: flex;
    gap: 2px;
    padding: 3px 0 2px;
}
.zoom-bar button {
    width: 12px;
}
.zoom-bar .rate {
    width: 27px;
    margin-right: 3px;
    background: linear-gradient(90deg, #27d6d0 8px, #d4d4d4 8px);
}

/* lower panes */
.lower {
    flex: 1;
    gap: 7px;
}
.info {
    width: 175px;
    border-radius: 3px;
    background: #999;
    overflow: hidden;
    font-family: Roboto, "Liberation Sans", sans-serif;
}
.info h2 {
    padding: 2px 4px 1px;
    background: #b0b0b0;
    font-family: Inter, "Liberation Sans", sans-serif;
    font-size: 8px;
    font-weight: 600;
}
.info p {
    padding: 3px 4px 10px;
    line-height: 11px;
}
.clip-view {
    flex: 1;
    display: flex;
    align-items: center;
    justify-content: center;
    border-radius: 3px;
    background: #999;
    font-family: Roboto, "Liberation Sans", sans-serif;
}

/* status bar */
.status {
    display: flex;
    align-items: center;
    gap: 7px;
    height: 15px;
}
.info-toggle {
    width: 12px;
    height: 12px;
    margin: 0 5px 0 1px;
    border-radius: 50%;
    background: #f5b41f;
    color: #704e00;
    font-weight: 700;
}
.message, .clip-slot, .device {
    display: flex;
    align-items: center;
    height: 15px;
    border-radius: 2px;
    background: #999;
    overflow: hidden;
}
.message {
    flex: 1;
    padding-left: 4px;
}
.clip-slot {
    width: 167px;
}
.clip-slot button {
    width: 15px;
    height: 15px;
    background: #fbb417;
    font-size: 7px;
}
.device {
    gap: 4px;
    padding-left: 5px;
}
.device span {
    padding-left: 4px;
    border-left: 1px solid #717171;
    line-height: 15px;
}
.status > .bare {
    margin: 0 2px 0 5px;
}

/* pack overview */
.packs {
    width: 211px;
    margin-top: 1px;
    border-radius: 3px;
    background: #999;
}
.packs-head {
    display: flex;
    align-items: center;
    gap: 12px;
    height: 15px;
    padding: 0 6px 0 4px;
    border-bottom: 1px solid #717171;
}
.packs-head h2 {
    margin-right: auto;
    font-size: 8px;
    font-weight: 600;
}
.packs p {
    padding: 5px 4px;
    font-size: 9px;
}
```
